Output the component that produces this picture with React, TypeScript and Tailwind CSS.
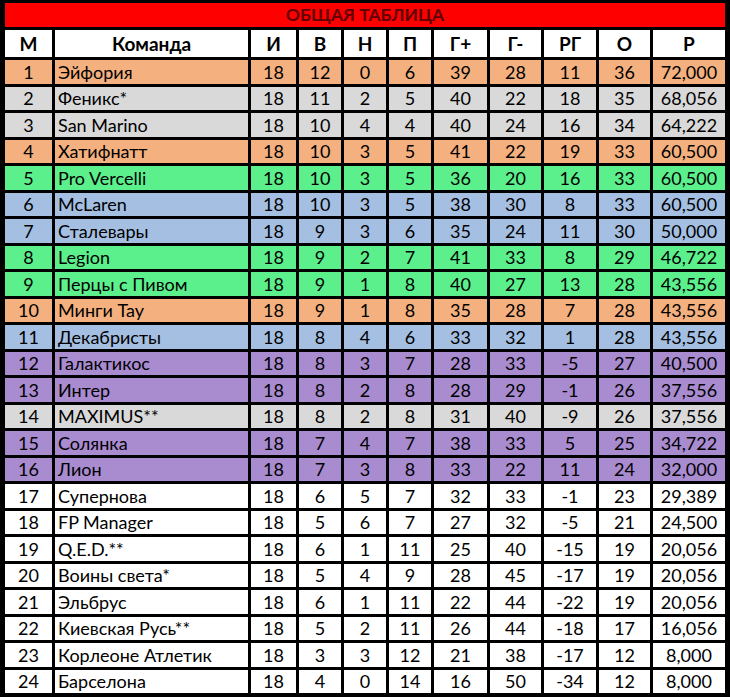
const rows: [number, string, number, number, number, number, number, number, number, number, string, string][] = [
  [1, "Эйфория", 18, 12, 0, 6, 39, 28, 11, 36, "72,000", "orange"],
  [2, "Феникс*", 18, 11, 2, 5, 40, 22, 18, 35, "68,056", "gray"],
  [3, "San Marino", 18, 10, 4, 4, 40, 24, 16, 34, "64,222", "gray"],
  [4, "Хатифнатт", 18, 10, 3, 5, 41, 22, 19, 33, "60,500", "orange"],
  [5, "Pro Vercelli", 18, 10, 3, 5, 36, 20, 16, 33, "60,500", "green"],
  [6, "McLaren", 18, 10, 3, 5, 38, 30, 8, 33, "60,500", "blue"],
  [7, "Сталевары", 18, 9, 3, 6, 35, 24, 11, 30, "50,000", "blue"],
  [8, "Legion", 18, 9, 2, 7, 41, 33, 8, 29, "46,722", "green"],
  [9, "Перцы с Пивом", 18, 9, 1, 8, 40, 27, 13, 28, "43,556", "green"],
  [10, "Минги Тау", 18, 9, 1, 8, 35, 28, 7, 28, "43,556", "orange"],
  [11, "Декабристы", 18, 8, 4, 6, 33, 32, 1, 28, "43,556", "blue"],
  [12, "Галактикос", 18, 8, 3, 7, 28, 33, -5, 27, "40,500", "purple"],
  [13, "Интер", 18, 8, 2, 8, 28, 29, -1, 26, "37,556", "purple"],
  [14, "MAXIMUS**", 18, 8, 2, 8, 31, 40, -9, 26, "37,556", "gray"],
  [15, "Солянка", 18, 7, 4, 7, 38, 33, 5, 25, "34,722", "purple"],
  [16, "Лион", 18, 7, 3, 8, 33, 22, 11, 24, "32,000", "purple"],
  [17, "Супернова", 18, 6, 5, 7, 32, 33, -1, 23, "29,389", "white"],
  [18, "FP Manager", 18, 5, 6, 7, 27, 32, -5, 21, "24,500", "white"],
  [19, "Q.E.D.**", 18, 6, 1, 11, 25, 40, -15, 19, "20,056", "white"],
  [20, "Воины света*", 18, 5, 4, 9, 28, 45, -17, 19, "20,056", "white"],
  [21, "Эльбрус", 18, 6, 1, 11, 22, 44, -22, 19, "20,056", "white"],
  [22, "Киевская Русь**", 18, 5, 2, 11, 26, 44, -18, 17, "16,056", "white"],
  [23, "Корлеоне Атлетик", 18, 3, 3, 12, 21, 38, -17, 12, "8,000", "white"],
  [24, "Барселона", 18, 4, 0, 14, 16, 50, -34, 12, "8,000", "white"],
];

const bg: Record<string, string> = {
  orange: "bg-[#f4b07e]",
  gray: "bg-[#d9d9d9]",
  green: "bg-[#5cf08d]",
  blue: "bg-[#a4bfe2]",
  purple: "bg-[#a98bd0]",
  white: "bg-white",
};

const headers = ["М", "Команда", "И", "В", "Н", "П", "Г+", "Г-", "РГ", "О", "Р"];

const cols =
  "grid grid-cols-[47px_193px_45px_42px_42px_42px_53px_51px_52px_51px_72px] grid-rows-[100%] gap-x-[3px] overflow-hidden";

export default function App() {
  return (
    <div
      className="w-[730px] h-[697px] bg-black pt-[3px] px-[5px] flex flex-col gap-[3px] text-[18px] leading-none text-black"
      style={{ fontFamily: "Lato, 'Open Sans', sans-serif" }}
    >
      <div className="h-[24px] shrink-0 bg-[#ff0000] flex items-center justify-center font-bold text-[#600000] text-[17.5px]">
        ОБЩАЯ ТАБЛИЦА
      </div>
      <div className={`${cols} h-[27px] shrink-0`}>
        {headers.map((h) => (
          <div key={h} className="bg-white flex items-center justify-center font-bold text-[19px]">
            {h}
          </div>
        ))}
      </div>
      {rows.map((r) => {
        const color = bg[r[11]];
        const cells = r.slice(2, 11);
        return (
          <div key={r[0]} className={`${cols} h-[23.5px] shrink-0`}>
            <div className={`${color} flex items-center justify-center`}>{r[0]}</div>
            <div className={`${color} flex items-center pl-[3px]`}>{r[1]}</div>
            {cells.map((c, i) => (
              <div key={i} className={`${color} flex items-center justify-center`}>
                {c}
              </div>
            ))}
          </div>
        );
      })}
    </div>
  );
}
